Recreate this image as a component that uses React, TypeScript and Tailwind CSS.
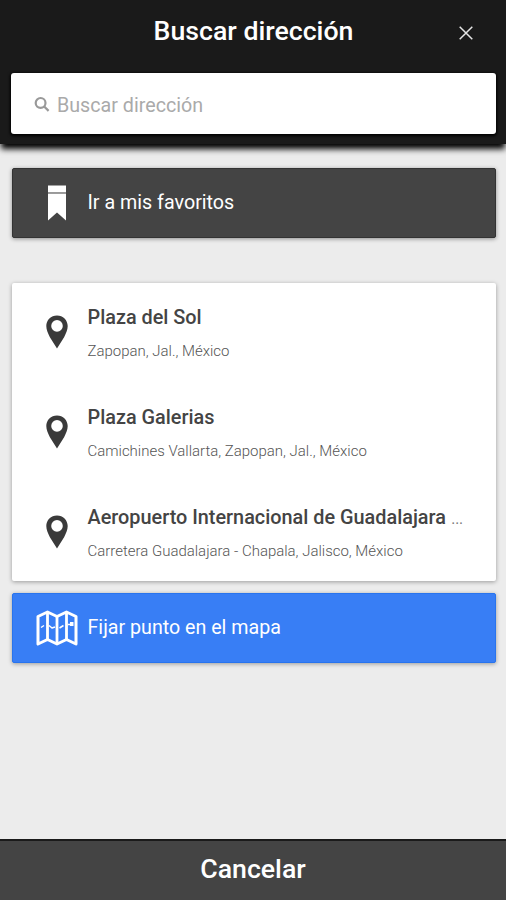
interface Place {
  name: string
  address: string
  truncated?: boolean
}

const PLACES: Place[] = [
  { name: 'Plaza del Sol', address: 'Zapopan, Jal., México' },
  { name: 'Plaza Galerias', address: 'Camichines Vallarta, Zapopan, Jal., México' },
  {
    name: 'Aeropuerto Internacional de Guadalajara',
    address: 'Carretera Guadalajara - Chapala, Jalisco, México',
    truncated: true,
  },
]

function SearchIcon() {
  return (
    <svg viewBox="0 0 16 16" className="h-4 w-4" fill="none" stroke="#999999" strokeWidth="2.2">
      <circle cx="6.6" cy="6.9" r="4.9" />
      <path d="M10.2 10.5 14.6 14.9" />
    </svg>
  )
}

function BookmarkIcon() {
  return (
    <svg viewBox="0 0 20 36" className="h-9 w-5" fill="#ffffff">
      <path d="M1 .5h18V7H1z" />
      <path d="M1 8.5h18v27l-9-8-9 8z" />
      <path d="M1 7h18v1.5H1z" fill="#999999" />
    </svg>
  )
}

function PinIcon() {
  return (
    <svg viewBox="0 0 22 34" className="h-[34px] w-[22px]" fill="#3a3a3a">
      <path
        fillRule="evenodd"
        d="M11 .4C5 .4.3 5 .3 11c0 3.8 1.6 7 3.6 11.2L11 33.5l7.1-11.3c2-4.2 3.6-7.4 3.6-11.2C21.7 5 17 .4 11 .4zm0 4.7a5.8 5.8 0 1 1 0 11.6a5.8 5.8 0 0 1 0-11.6z"
      />
    </svg>
  )
}

function MapIcon() {
  return (
    <svg viewBox="0 0 42 36" className="h-9 w-[42px]" fill="none" stroke="#ffffff" strokeLinejoin="round">
      <path d="M2 6.5 11.5 2 21 6.5 30.5 2 40 6.5V34l-9.5-4.5L21 34l-9.5-4.5L2 34z" strokeWidth="3" />
      <path d="M11.5 2v27.5M21 6.5V34M30.5 2v27.5" strokeWidth="2.8" />
      <path d="M5 17.5 8 15.5M13 15.5l3 2.5 3-1M23.5 18l4-2.5M32 14.5h2.500" strokeWidth="1.5" />
      <path d="M34 12h3.5v4H34z" fill="#ffffff" stroke="none" />
    </svg>
  )
}

export default function App() {
  return (
    <div className="flex h-[900px] w-full flex-col overflow-hidden bg-[#ececec] font-['Roboto',sans-serif]">
      {/* Header */}
      <header className="h-[144px] shrink-0 bg-[#1a1a1a] pr-2.5 pl-[11px] shadow-[0_6px_6px_-1px_#000000]">
        <div className="grid h-[73px] grid-cols-[60px_1fr_60px] items-center pb-[11px]">
          <h1 className="col-start-2 text-center text-[26.7px] leading-8 font-medium whitespace-nowrap text-white">
            Buscar dirección
          </h1>
          <button type="button" aria-label="Cerrar" className="flex justify-center pt-[3px]">
            <svg viewBox="0 0 14 14" className="h-3.5 w-3.5" stroke="#e5e5e5" strokeWidth="1.5">
              <path d="M.7.7l12.6 12.6M13.3.7.7 13.3" />
            </svg>
          </button>
        </div>
        <div className="flex h-[61px] items-center gap-[7px] rounded-[3px] bg-white pl-[23px] shadow-[0_1px_3px_1px_#000000]">
          <SearchIcon />
          <span className="pt-1 text-[19.7px] leading-6 text-[#aaaaaa]">Buscar dirección</span>
        </div>
      </header>

      <main className="flex grow flex-col pt-6 pr-2.5 pl-3">
        <button
          type="button"
          className="flex h-[70px] shrink-0 items-center rounded-[2px] border border-[#333333] bg-[#444444] shadow-[0_1px_4px_rgba(0,0,0,0.4)]"
        >
          <span className="flex w-[74.5px] justify-center pl-[13px]"><BookmarkIcon /></span>
          <span className="text-[19.7px] leading-[30px] text-white">Ir a mis favoritos</span>
        </button>

        {/* Places */}
        <ul className="mt-[45px] h-[298px] shrink-0 rounded-[2px] bg-white shadow-[0_1px_4px_rgba(0,0,0,0.35)]">
          {PLACES.map(p => (
            <li key={p.name} className="flex h-[100px] items-start">
              <span className="flex w-[75.5px] shrink-0 justify-center pt-8 pl-[14px]"><PinIcon /></span>
              <div className="pt-[23px] whitespace-nowrap">
                <p className="text-[19.85px] leading-6 font-medium text-[#444444]">
                  {p.name}
                  {p.truncated && <span className="font-light text-[#777777]"> …</span>}
                </p>
                <p className="mt-[11px] text-[14.97px] leading-5 font-light text-[#555555]">{p.address}</p>
              </div>
            </li>
          ))}
        </ul>

        <button
          type="button"
          className="mt-3 flex h-[70px] shrink-0 items-center rounded-[2px] border border-[#2874ee] bg-[#387ef5] shadow-[0_1px_4px_rgba(0,0,0,0.35)]"
        >
          <span className="flex w-[74.5px] justify-center pl-[13px]"><MapIcon /></span>
          <span className="text-[19.65px] leading-[30px] text-white">Fijar punto en el mapa</span>
        </button>
      </main>

      <footer className="flex h-[61px] shrink-0 items-center justify-center border-t-2 border-[#1a1a1a] bg-[#444444] pb-1">
        <button type="button" className="text-[26.7px] leading-8 font-medium text-white">Cancelar</button>
      </footer>
    </div>
  )
}
